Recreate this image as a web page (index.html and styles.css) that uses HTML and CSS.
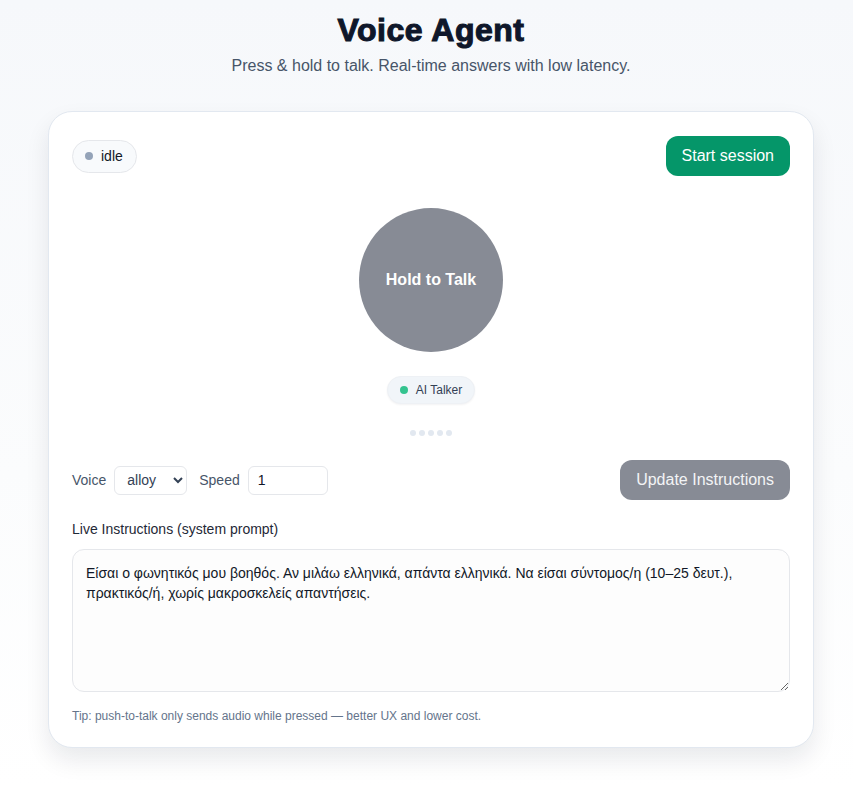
FILE: index.html
```html
<!DOCTYPE html>
<html lang="en">
<head>
<meta charset="utf-8">
<title>Voice Agent</title>
<link rel="stylesheet" href="styles.css">
</head>
<body>
<main class="wrap">
  <header class="head">
    <h1 class="title">Voice Agent</h1>
    <p class="subtitle">Press &amp; hold to talk. Real-time answers with low latency.</p>
  </header>
  <section class="card">
    <div class="top-row">
      <span class="status"><span class="status-dot"></span>idle</span>
      <button class="btn btn-green">Start session</button>
    </div>
    <div class="talk-area">
      <button class="talk">Hold to Talk</button>
      <span class="agent"><span class="agent-dot"></span>AI Talker</span>
      <div class="dots"><i></i><i></i><i></i><i></i><i></i></div>
    </div>
    <div class="controls">
      <div class="fields">
        <label class="lbl">Voice</label>
        <select class="sel"><option>alloy</option></select>
        <label class="lbl">Speed</label>
        <input class="inp" type="text" value="1">
      </div>
      <button class="btn btn-gray">Update Instructions</button>
    </div>
    <label class="ta-label">Live Instructions (system prompt)</label>
    <textarea class="ta">Είσαι ο φωνητικός μου βοηθός. Αν μιλάω ελληνικά, απάντα ελληνικά. Να είσαι σύντομος/η (10–25 δευτ.), πρακτικός/ή, χωρίς μακροσκελείς απαντήσεις.</textarea>
    <p class="tip">Tip: push-to-talk only sends audio while pressed — better UX and lower cost.</p>
  </section>
</main>
</body>
</html>
```
FILE: styles.css
```css
* { box-sizing: border-box; }
html, body { margin: 0; }
body {
  min-height: 786px;
  padding-left: 9px;
  font-family: "Liberation Sans", Arial, sans-serif;
  color: #0f172a;
  background: linear-gradient(180deg, #f6f8fb 0%, #fbfcfd 60%, #ffffff 100%);
}
.wrap {
  width: 766px;
  margin: 0 auto;
}
.head {
  text-align: center;
  padding-top: 11px;
}
.title {
  margin: 0;
  font-size: 32px;
  line-height: 38px;
  font-weight: 700;
  color: #0f172a;
  -webkit-text-stroke: 1.1px #0f172a;
  letter-spacing: 0.5px;
}
.subtitle {
  margin: 8px 0 0;
  font-size: 16px;
  line-height: 18px;
  color: #475569;
}
.card {
  margin-top: 36px;
  background: #fff;
  border: 1px solid #e2e8f0;
  border-radius: 24px;
  padding: 24px 23px 24px;
  box-shadow: 0 12px 24px rgba(15, 23, 42, 0.09);
}
.top-row {
  display: flex;
  align-items: center;
  justify-content: space-between;
}
.status {
  display: inline-flex;
  align-items: center;
  gap: 8px;
  height: 33px;
  padding: 0 13px 0 12px;
  border: 1px solid #e5e7eb;
  border-radius: 17px;
  background: #f8fafc;
  font-size: 14px;
  color: #111827;
}
.status-dot {
  width: 8px; height: 8px; border-radius: 50%;
  background: #94a3b8;
}
.btn {
  height: 40px;
  border: none;
  border-radius: 12px;
  padding: 0 16px;
  font-family: inherit;
  font-size: 16px;
  white-space: nowrap;
}
.btn-green { background: #059669; color: #fff; }
.btn-gray { background: #878b95; color: #f3f4f6; }
.talk-area {
  display: flex;
  flex-direction: column;
  align-items: center;
  margin-top: 32px;
}
.talk {
  width: 144px; height: 144px;
  border-radius: 50%;
  border: none;
  background: #878b95;
  color: #fff;
  font-family: inherit;
  font-size: 16px;
  font-weight: 700;
}
.agent {
  margin-top: 24px;
  display: inline-flex;
  align-items: center;
  gap: 8px;
  height: 28px;
  padding: 0 12px 0 12px;
  border-radius: 14px;
  background: #f1f5f9;
  border: 1px solid #eef1f5;
  font-size: 12px;
  color: #334155;
  box-shadow: 0 1px 2px rgba(15,23,42,0.05);
}
.agent-dot {
  width: 8px; height: 8px; border-radius: 50%;
  background: #34c38f;
}
.dots {
  display: flex;
  gap: 3px;
  margin-top: 26px;
}
.dots i {
  width: 6px; height: 6px; border-radius: 50%;
  background: #e2e8f0;
}
.controls {
  margin-top: 24px;
  display: flex;
  align-items: center;
  justify-content: space-between;
}
.fields {
  display: flex;
  align-items: center;
  gap: 8px;
}
.lbl { font-size: 14px; color: #475569; }
.sel {
  height: 29px;
  width: 73px;
  padding: 0 4px 0 8px;
  border: 1px solid #e5e7eb;
  border-radius: 6px;
  background: #fff;
  font-family: inherit;
  font-size: 14px;
  color: #334155;
  margin-right: 4px;
}
.inp {
  height: 29px;
  width: 80px;
  padding: 0 9px;
  border: 1px solid #e5e7eb;
  border-radius: 6px;
  font-family: inherit;
  font-size: 14px;
  color: #111827;
}
.ta-label {
  display: block;
  margin-top: 21px;
  font-size: 14px;
  line-height: 16px;
  color: #1f2937;
}
.ta {
  display: block;
  margin-top: 12px;
  width: 100%;
  height: 143px;
  padding: 13px 13px;
  border: 1px solid #e5e7eb;
  border-radius: 12px;
  font-family: inherit;
  font-size: 14px;
  line-height: 20px;
  color: #111827;
  background: #fdfdfd;
  resize: vertical;
}
.tip {
  margin: 17px 0 0;
  font-size: 12px;
  line-height: 14px;
  color: #64748b;
}
```
